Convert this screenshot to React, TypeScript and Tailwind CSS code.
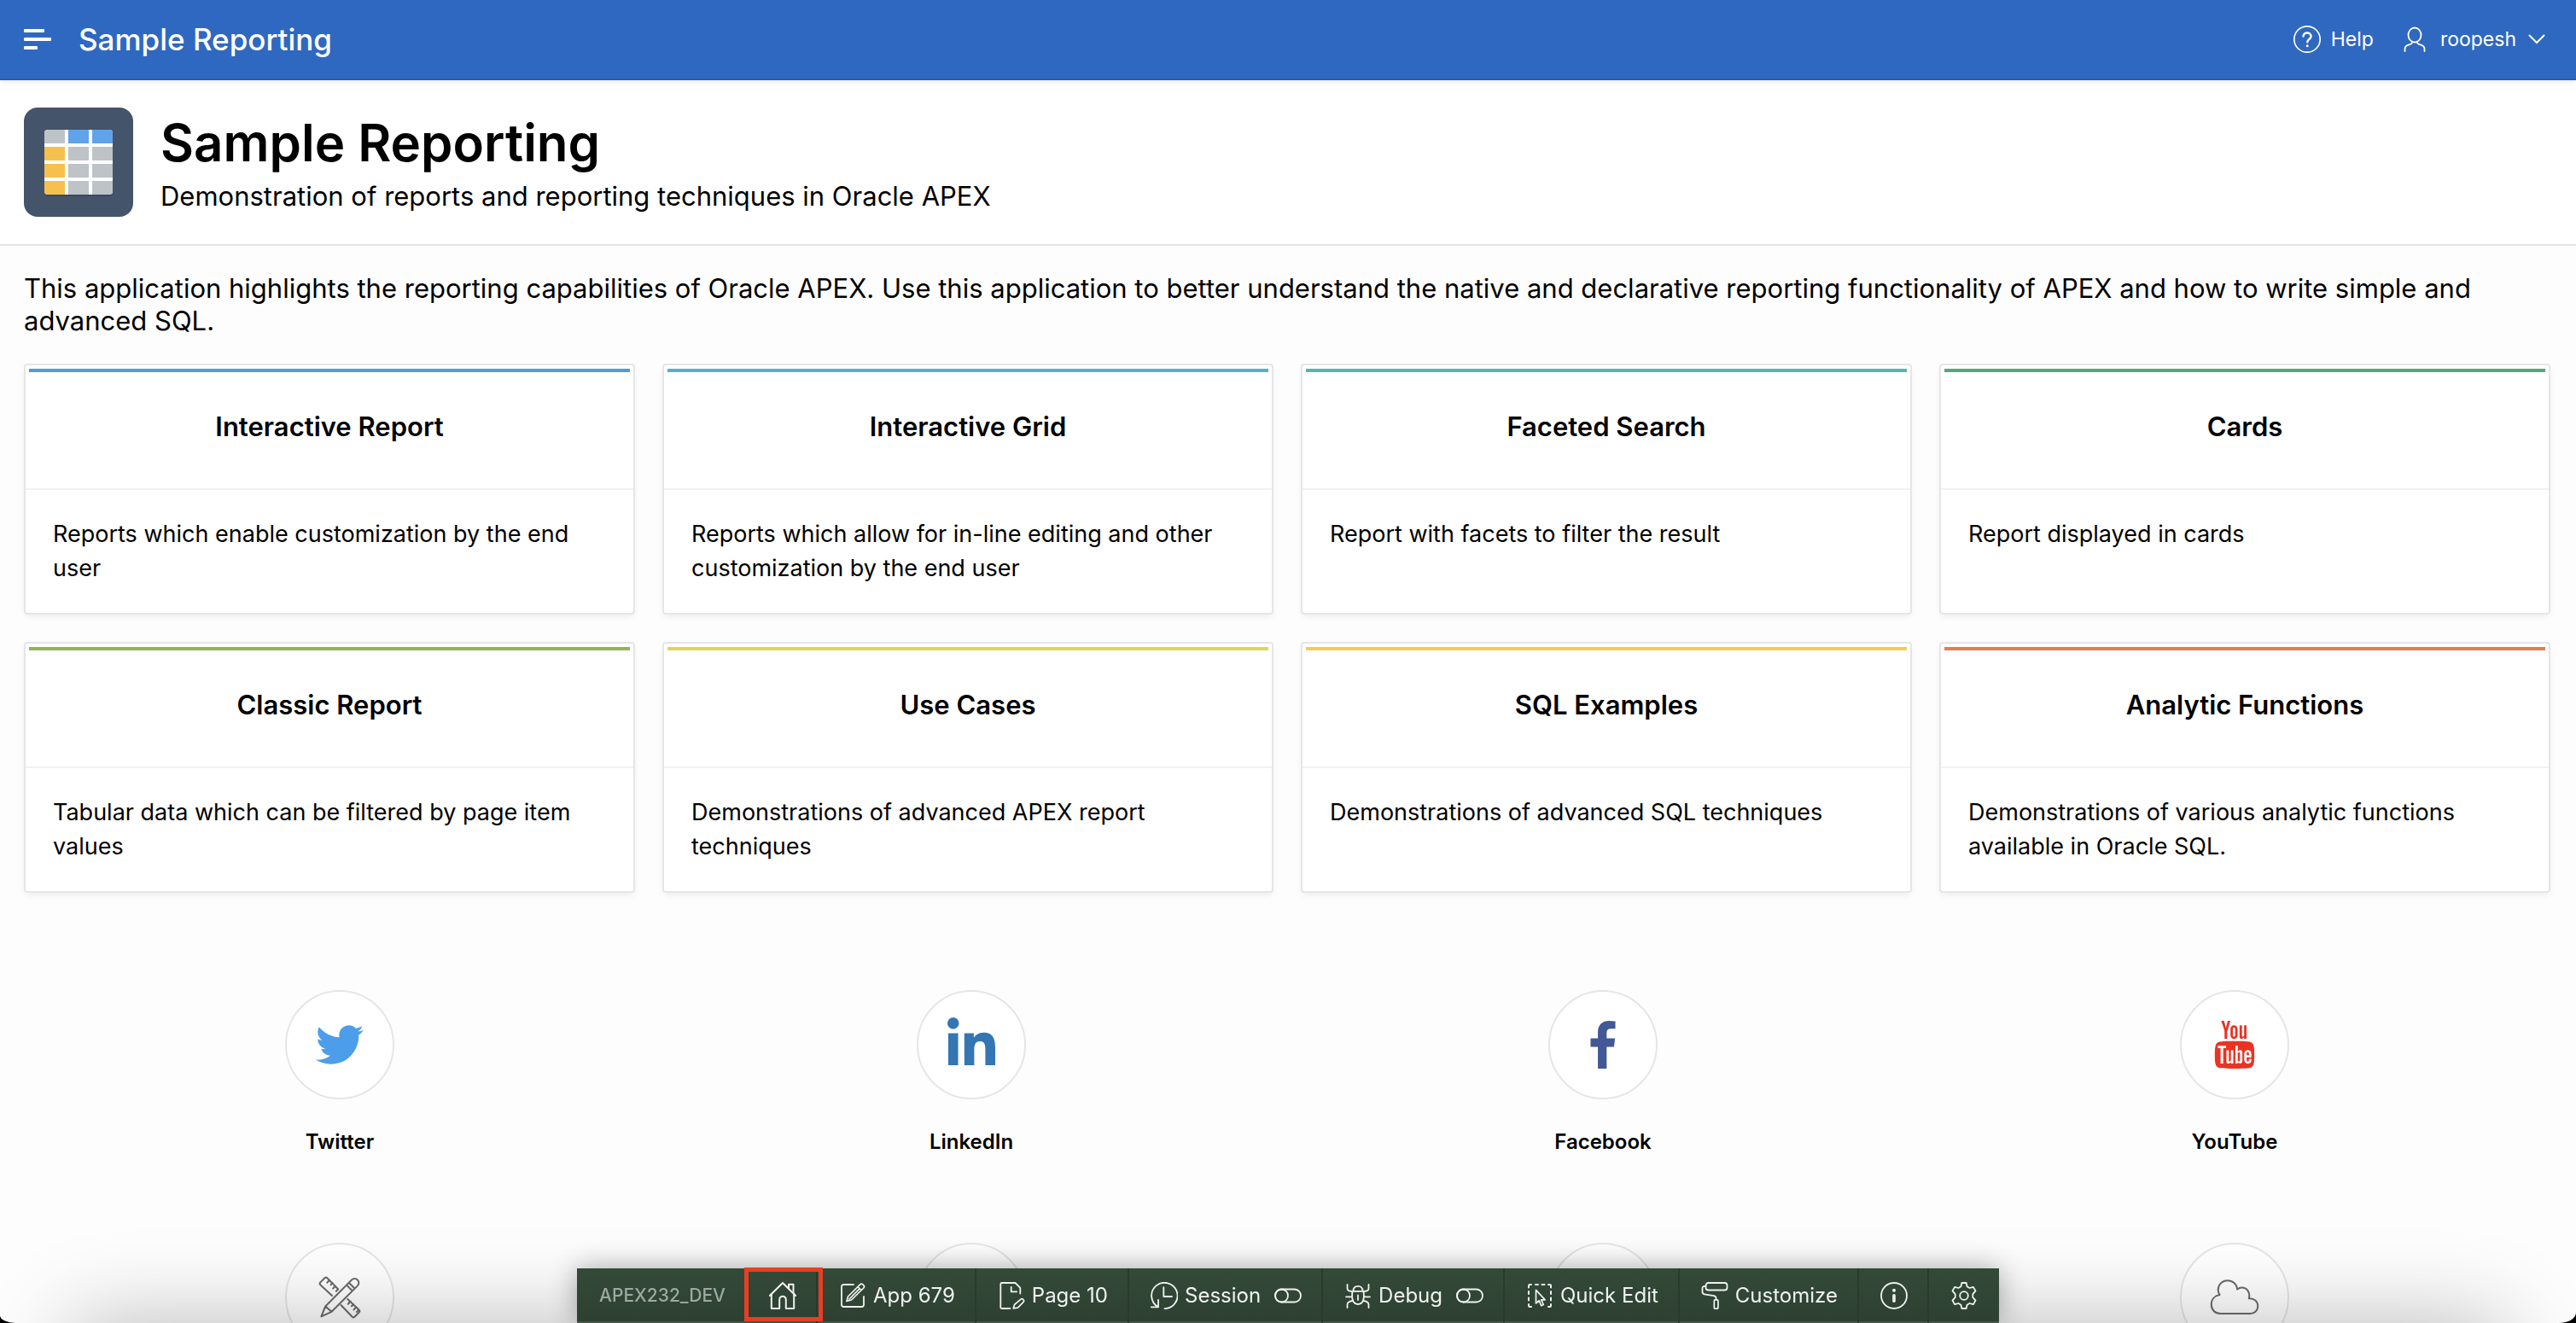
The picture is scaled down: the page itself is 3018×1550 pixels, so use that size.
import React from "react";
import type { ReactNode } from "react";
import { FaLinkedinIn, FaTwitter } from "react-icons/fa";
import { TfiYoutube } from "react-icons/tfi";

/* ---------- Icons ---------- */

function LineIcon({ children, className = "size-8" }: { children: ReactNode; className?: string }) {
  return (
    <svg
      viewBox="0 0 32 32"
      className={className}
      fill="none"
      stroke="currentColor"
      strokeWidth={2}
      strokeLinecap="round"
      strokeLinejoin="round"
      aria-hidden="true"
    >
      {children}
    </svg>
  );
}

const MenuIcon = () => (
  <svg viewBox="0 0 32 24" className="h-6 w-8" fill="currentColor" aria-hidden="true">
    <rect x="0" y="0" width="24" height="4" rx="1" />
    <rect x="0" y="10" width="32" height="4" rx="1" />
    <rect x="0" y="20" width="16" height="4" rx="1" />
  </svg>
);

const HelpIcon = () => (
  <LineIcon>
    <circle cx="16" cy="16" r="15.2" strokeWidth={1.7} />
    <path d="M11.5 12.6c0-2.600 2-4.100 4.500-4.100s4.600 1.600 4.600 4.100c0 3.100-4.300 3.400-4.300 6.600" strokeWidth={2.400} />
    <circle cx="16.200" cy="23.800" r="1.500" fill="currentColor" stroke="none" />
  </LineIcon>
);

const UserIcon = () => (
  <LineIcon>
    <ellipse cx="16" cy="11" rx="7.500" ry="8.500" strokeWidth={1.800} />
    <path d="M4.500 30v-2.500c0-2.500 1.600-4 4-4.800l3-1.100c1.200-.5 1.700-1.300 1.700-3M27.500 30v-2.500c0-2.500-1.600-4-4-4.800l-3-1.100c-1.200-.5-1.700-1.300-1.700-3" strokeWidth={1.800} />
  </LineIcon>
);

const ChevronIcon = () => (
  <svg viewBox="0 0 20 12" className="h-3 w-5" fill="none" stroke="currentColor" strokeWidth={2} strokeLinecap="round" aria-hidden="true">
    <path d="M1.500 1.500 10 10l8.500-8.500" />
  </svg>
);

const HomeIcon = () => (
  <LineIcon>
    <path d="M.8 16 16 1l15.200 15" />
    <path d="M2.800 14v17h9.400V20.500a3.800 3.800 0 0 1 7.600 0V31h9.400V14" />
    <path d="M23 7.500V2.800h5.500V13" />
  </LineIcon>
);

const EditIcon = () => (
  <LineIcon>
    <path d="M17 3H5.500A2.500 2.500 0 0 0 3 5.500v21A2.500 2.500 0 0 0 5.500 29h21a2.500 2.500 0 0 0 2.500-2.500V17" strokeWidth={1.800} />
    <path d="M9 22.500l1.500-5.500L24.700 2.900a2.200 2.200 0 0 1 3.100 0l1 1a2.200 2.200 0 0 1 0 3.100L14.500 21 9 22.500zM22 5.500l4 4M12 20 23.500 8.300" strokeWidth={1.700} />
  </LineIcon>
);

const PageIcon = () => (
  <LineIcon>
    <path d="M14.500 31H4.800a1.500 1.500 0 0 1-1.500-1.500v-27A1.500 1.500 0 0 1 4.800 1H20.500l5.800 5.800V13.500" strokeWidth={1.800} />
    <path d="M15.700 5.800V11.300h6.500" strokeWidth={1.800} />
    <path d="M18.300 30.800l1.200-4.300 7.500-6.300a2 2 0 0 1 2.700.2l.3.300a2 2 0 0 1 0 2.700l-6.500 6.800-5.200.6z" strokeWidth={1.700} />
  </LineIcon>
);

const SessionIcon = () => (
  <LineIcon>
    <path d="M16.500 31.200A15.200 15.200 0 1 0 8.800 29.200" strokeWidth={1.800} />
    <path d="M9 20.800V29.300H.8M15.300 6.200V17h9.700" strokeWidth={1.800} />
  </LineIcon>
);

const ToggleIcon = () => (
  <LineIcon>
    <rect x="1" y="8.500" width="30" height="15" rx="7.500" strokeWidth={1.800} />
    <circle cx="8.500" cy="16" r="7.500" strokeWidth={1.800} />
  </LineIcon>
);

const DebugIcon = () => (
  <LineIcon>
    <path d="M8.500 10.800h15M10.500 10.500C10.500 7 12.500 4.800 16 4.800s5.500 2.200 5.500 5.700" strokeWidth={1.800} />
    <path d="M9.500 11c-1.300 8.500.5 15 6.500 15s7.800-6.500 6.500-15M16 15.500V21M2 17.300h6.500M23.500 17.300H30" strokeWidth={1.800} />
    <path d="M3.500 3v4.200c0 2 1 3 2.800 3.300l2.200.3M28.500 3v4.200c0 2-1 3-2.800 3.300l-2.200.3M3.500 30v-3.500c0-2.500 1.800-3.800 6-4.500M28.500 30v-3.500c0-2.500-1.800-3.800-6-4.500" strokeWidth={1.800} />
  </LineIcon>
);

const QuickEditIcon = () => (
  <LineIcon>
    <path d="M3 6.500V4.500A1.500 1.500 0 0 1 4.500 3H6M11 3h3M18.500 3h3M26 3h1.500A1.500 1.500 0 0 1 29 4.500v2M29 11v3M29 18.500v3M29 26v1.500a1.500 1.500 0 0 1-1.500 1.500H26M6 29H4.500A1.500 1.500 0 0 1 3 27.500V26M3 21.500v-3M3 14v-3" />
    <path d="M11.500 9.300V25l3.600-3.300 2.600 6 2.600-1.200-2.600-5.700h4.500z" strokeWidth={1.700} />
  </LineIcon>
);

const CustomizeIcon = () => (
  <LineIcon>
    <rect x="5.500" y="1" width="25" height="8.500" rx="3" strokeWidth={1.800} />
    <path d="M5.500 4.800H4A2.500 2.500 0 0 0 1.500 7.300v4.200c0 1.700.8 2.500 2.500 2.800l11 1.900c1.700.3 2.500 1.200 2.500 2.800v1.800" strokeWidth={1.800} />
    <rect x="15.300" y="20.800" width="4.600" height="10.400" rx="1.200" strokeWidth={1.700} />
  </LineIcon>
);

const InfoIcon = () => (
  <LineIcon>
    <circle cx="16" cy="16" r="15" strokeWidth={1.800} />
    <circle cx="16" cy="9.800" r="2" fill="currentColor" stroke="none" />
    <path d="M16 15.800v6.400" strokeWidth={3.600} />
  </LineIcon>
);

const GearIcon = () => (
  <LineIcon>
    <path
      d="M13.400 1h5.200l1 4.300 3 1.700 4.200-1.200 2.700 4.600-3.200 3.700v3.800l3.200 3.700-2.700 4.600-4.200-1.200-3 1.700-1 4.300h-5.200l-1-4.300-3-1.700-4.200 1.200-2.700-4.600 3.200-3.700v-3.800L2.500 10.400l2.700-4.600L9.400 7l3-1.700z"
      strokeWidth={1.800}
    />
    <circle cx="16" cy="16" r="4.800" strokeWidth={1.800} />
  </LineIcon>
);

const FacebookIcon = () => (
  <svg viewBox="95 0 864 1664" className="h-14 w-[30px]" fill="currentColor" aria-hidden="true">
    <path d="M959 12v264h-157q-86 0-116 36t-30 108v189h293l-39 296h-254v759h-306v-759h-255v-296h255v-218q0-186 104-288.500t277-102.500q147 0 228 12z" />
  </svg>
);

const PencilRulerIcon = () => (
  <svg viewBox="0 0 64 64" className="size-16" fill="none" stroke="currentColor" strokeWidth={2} strokeLinecap="round" strokeLinejoin="round" aria-hidden="true">
    <path d="M23 30 9.300 17.200a2 2 0 0 1 0-2.800l5.200-5.200a2 2 0 0 1 2.800 0L30.300 22.500" />
    <path d="M20 11.800l-2.700 2.900M23.500 15.200l-2 2M26.800 18.700l-2.700 2.900M29.800 22.800l-2 2" />
    <path d="M41.300 34 54.700 46.800a2 2 0 0 1 0 2.800l-5.200 5.200a2 2 0 0 1-2.800 0L33.500 41" />
    <path d="M44.500 36.800l-2.700 2.900M48 40.200l-2 2M51.200 43.500l-2.700 2.900M54 47l-2 2" />
    <path d="M10.400 54.300 15.200 42.500 46 11.500a4.800 4.800 0 0 1 6.900 0 4.800 4.800 0 0 1 0 6.900L22.500 48.800zM15.200 42.500l7.300 6.300M43 15l6.500 6.500M40 17.500l6.500 6.500" />
  </svg>
);

const CloudIcon = () => (
  <svg viewBox="0 0 64 64" className="size-16" fill="none" stroke="currentColor" strokeWidth={2} strokeLinecap="round" strokeLinejoin="round" aria-hidden="true">
    <path d="M15.500 51C9 51 4.800 46.500 4.800 40.300c0-5.800 3.700-10.300 9.700-11.200-1.300-2.100-1.800-4.100-1.800-6.100 0-6.100 5-10.700 11-10.700 6.200 0 10.700 4 11.500 10.200 1.600-1.300 3.300-2 5.300-2 5.700 0 10.300 5.200 8.300 12.800 6-.5 10.500 3.600 10.500 8.900 0 5-3.800 8.800-9 8.800z" />
  </svg>
);

const ReportTile = () => {
  const cells = [
    "bg-[#bdc3c7]", "bg-[#60a3e8]", "bg-[#60a3e8]",
    "bg-[#f5c04e]", "bg-[#bdc3c7]", "bg-[#bdc3c7]",
    "bg-[#f5c04e]", "bg-[#bdc3c7]", "bg-[#bdc3c7]",
    "bg-[#f5c04e]", "bg-[#bdc3c7]", "bg-[#bdc3c7]",
  ];
  return (
    <div className="flex size-32 shrink-0 items-center justify-center rounded-2xl bg-[#44546a]">
      <div className="grid w-20 grid-cols-3 gap-1 overflow-hidden rounded bg-white shadow-[0_2px_0_rgba(0,0,0,0.12)]">
        {cells.map((color, i) => (
          <span key={i} className={`h-4 ${color}`} />
        ))}
      </div>
    </div>
  );
};

/* ---------- Data ---------- */

const cards = [
  { title: "Interactive Report", text: "Reports which enable customization by the end user", bar: "bg-[#519bd6]" },
  { title: "Interactive Grid", text: "Reports which allow for in-line editing and other customization by the end user", bar: "bg-[#53b2cb]" },
  { title: "Faceted Search", text: "Report with facets to filter the result", bar: "bg-[#56b5b0]" },
  { title: "Cards", text: "Report displayed in cards", bar: "bg-[#56a87c]" },
  { title: "Classic Report", text: "Tabular data which can be filtered by page item values", bar: "bg-[#8eb654]" },
  { title: "Use Cases", text: "Demonstrations of advanced APEX report techniques", bar: "bg-[#dfd658]" },
  { title: "SQL Examples", text: "Demonstrations of advanced SQL techniques", bar: "bg-[#f5cb58]" },
  { title: "Analytic Functions", text: "Demonstrations of various analytic functions available in Oracle SQL.", bar: "bg-[#e07f4f]" },
];

const links: { label: string; color: string; icon: ReactNode }[] = [
  { label: "Twitter", color: "text-[#4c9eeb]", icon: <FaTwitter className="size-14" /> },
  { label: "LinkedIn", color: "text-[#3476b4]", icon: <FaLinkedinIn className="size-16" /> },
  { label: "Facebook", color: "text-[#435995]", icon: <FacebookIcon /> },
  { label: "YouTube", color: "text-[#e93323]", icon: <TfiYoutube className="size-14" /> },
  { label: "", color: "text-[#6b6b6b]", icon: <PencilRulerIcon /> },
  { label: "", color: "text-[#6b6b6b]", icon: null },
  { label: "", color: "text-[#6b6b6b]", icon: null },
  { label: "", color: "text-[#6b6b6b]", icon: <CloudIcon /> },
];

/* ---------- Developer toolbar ---------- */

function ToolButton({
  icon,
  label,
  name,
  toggle = false,
  marked = false,
  last = false,
}: {
  icon: ReactNode;
  label?: string;
  name?: string;
  toggle?: boolean;
  marked?: boolean;
  last?: boolean;
}) {
  return (
    <button
      type="button"
      aria-label={name}
      className={`relative flex h-16 items-center gap-2 border-r-2 pr-[23px] pl-[25px] whitespace-nowrap ${last ? "border-transparent" : "border-[#2a3b2d]"}`}
    >
      {icon}
      {label && <span>{label}</span>}
      {toggle && (
        <span className="ml-2">
          <ToggleIcon />
        </span>
      )}
      {marked && <span className="absolute -top-px -right-2 bottom-0.5 -left-1 z-10 border-[5px] border-[#e83e23]" />}
    </button>
  );
}

function DevToolbar() {
  return (
    <div className="fixed inset-x-0 bottom-0 flex justify-center">
      <nav
        aria-label="Developer toolbar"
        className="flex items-center bg-linear-to-b from-[#344a38] to-[#2d4031] text-2xl text-[#f0f2f0] shadow-[0_0_32px_rgba(0,0,0,0.32),inset_0_-2px_0_#445747]"
      >
        <span className="px-[26px] text-[21px] font-medium text-[#9ea9a0]">APEX232_DEV</span>
        <ToolButton icon={<HomeIcon />} name="Home" marked />
        <ToolButton icon={<EditIcon />} label="App 679" />
        <ToolButton icon={<PageIcon />} label="Page 10" />
        <ToolButton icon={<SessionIcon />} label="Session" toggle />
        <ToolButton icon={<DebugIcon />} label="Debug" toggle />
        <ToolButton icon={<QuickEditIcon />} label="Quick Edit" />
        <ToolButton icon={<CustomizeIcon />} label="Customize" />
        <ToolButton icon={<InfoIcon />} name="Info" />
        <ToolButton icon={<GearIcon />} name="Settings" last />
      </nav>
    </div>
  );
}

/* ---------- Page ---------- */

export default function App() {
  return (
    <div className="h-screen overflow-hidden bg-black font-['Inter',sans-serif] text-black">
      <div className="relative h-full overflow-hidden bg-[#fdfdfd] [border-bottom-left-radius:18px_9px] [border-bottom-right-radius:20px_12px]">
        <header className="relative flex h-[94px] items-center justify-between border-b-2 border-[#295cae] bg-[#2f68c0] pr-9 pl-7 text-white shadow-[0_2px_8px_rgba(0,0,0,0.08)]">
          <div className="flex items-center gap-8">
            <button type="button" aria-label="Navigation menu">
              <MenuIcon />
            </button>
            <a href="#home" className="text-[35px] font-medium">
              Sample Reporting
            </a>
          </div>
          <div className="flex items-center gap-8 text-[23px]">
            <button type="button" className="flex items-center gap-3">
              <HelpIcon />
              Help
            </button>
            <button type="button" className="flex items-center gap-[14px]">
              <UserIcon />
              <span>roopesh</span>
              <ChevronIcon />
            </button>
          </div>
        </header>

        <section className="flex items-center gap-8 border-b-2 border-[#e3e3e3] bg-white px-7 py-8">
          <ReportTile />
          <div>
            <h1 className="mb-1.5 text-[60px] leading-[74px] font-semibold">Sample Reporting</h1>
            <p className="text-[31px] leading-10">Demonstration of reports and reporting techniques in Oracle APEX</p>
          </div>
        </section>

        <main className="pr-[30px] pl-7">
          <p className="py-[31px] text-[31px] leading-[38px]">
            This application highlights the reporting capabilities of Oracle APEX. Use this application to better
            understand the native and declarative reporting functionality of APEX and how to write simple and advanced
            SQL.
          </p>

          <div className="grid grid-cols-4 gap-8">
            {cards.map((card) => (
              <a
                key={card.title}
                href="#report"
                className="flex flex-col rounded border-2 border-[#e6e6e6] bg-white shadow-[0_4px_8px_-2px_rgba(0,0,0,0.08)]"
              >
                <div className="flex h-[146px] flex-col border-b-2 border-[#f1f1f1] p-1">
                  <div className={`h-1 ${card.bar}`} />
                  <h2 className="flex grow items-center justify-center pb-1 text-[31px] font-semibold">{card.title}</h2>
                </div>
                <p className="min-h-36 p-8 text-[27px] leading-10">{card.text}</p>
              </a>
            ))}
          </div>

          <div className="mt-[114px] grid grid-cols-4 gap-y-[102px]">
            {links.map((link, i) => (
              <a key={i} href="#link" aria-label={link.label || "More"} className="flex flex-col items-center gap-[34px]">
                <span
                  className={`flex size-32 items-center justify-center rounded-full border-2 border-[#e6e6e6] bg-white ${link.color}`}
                >
                  {link.icon}
                </span>
                <span className="h-8 text-2xl leading-8 font-semibold">{link.label}</span>
              </a>
            ))}
          </div>
        </main>

        <div className="pointer-events-none absolute inset-x-[84px] top-full h-40 shadow-[0_0_104px_rgba(0,0,0,0.27)]" />
        <DevToolbar />
      </div>
    </div>
  );
}
